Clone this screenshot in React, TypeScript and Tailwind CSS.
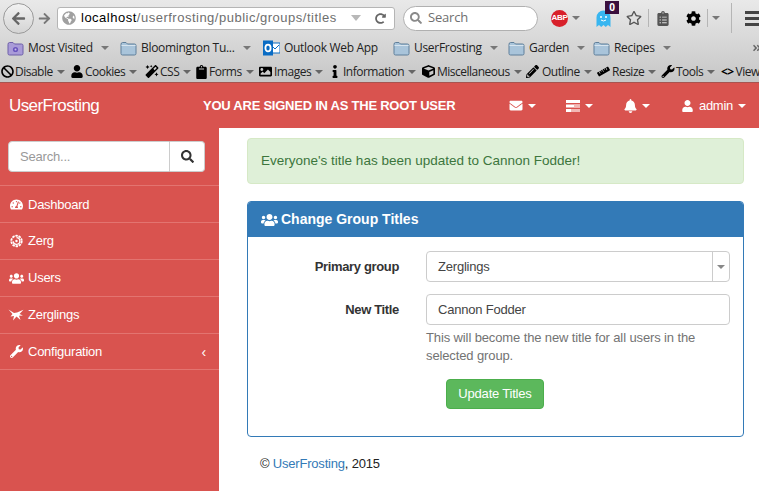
import { ReactNode } from "react";
import {
  FaAngleDoubleRight, FaArrowLeft, FaArrowRight, FaBan, FaBell, FaClipboard, FaClipboardList, FaCog, FaCube, FaEnvelope, FaGlobeAmericas,
  FaImage, FaInfo, FaMagic, FaPencilAlt, FaRedoAlt, FaRegStar, FaRuler, FaSearch, FaTachometerAlt, FaUser, FaUsers, FaWrench,
} from "react-icons/fa";

const Caret = ({ className = "" }: { className?: string }) => (
  <span className={`inline-block w-0 h-0 border-x-[4px] border-x-transparent border-t-[4px] ${className}`} />
);

const Folder = () => (
  <svg width="17" height="15" viewBox="0 0 17 15" className="shrink-0">
    <path d="M1 3.5 Q1 1.5 2.5 1.5 H6 L7.5 3 H14.5 Q16 3 16 4.5 V12.5 Q16 14 14.5 14 H2.5 Q1 14 1 12.5 Z" fill="#a9c4da" stroke="#5f7f9a" />
    <rect x="1.5" y="4" width="14" height="1" fill="#d7e4ee" />
  </svg>
);

const MostVisited = () => (
  <svg width="17" height="15" viewBox="0 0 17 15" className="shrink-0">
    <path d="M1 3.5 Q1 1.5 2.5 1.5 H6 L7.5 3 H14.5 Q16 3 16 4.5 V12.5 Q16 14 14.5 14 H2.5 Q1 14 1 12.5 Z" fill="#a99bd8" stroke="#6d5fa8" />
    <circle cx="8.5" cy="8.5" r="2.6" fill="#6a55bd" />
    <circle cx="8.5" cy="8.5" r="1" fill="#c8bfe8" />
  </svg>
);

const Outlook = () => (
  <svg width="17" height="16" viewBox="0 0 17 16" className="shrink-0">
    <rect x="7" y="3" width="10" height="10" fill="#fff" stroke="#0a6cc4" />
    <path d="M8 5 L12 9 L16 5" fill="none" stroke="#0a6cc4" />
    <rect x="0" y="0.5" width="10" height="15" fill="#0a6cc4" />
    <ellipse cx="5" cy="8" rx="2.6" ry="3.4" fill="none" stroke="#fff" strokeWidth="1.8" />
  </svg>
);

const ZergSwirl = () => (
  <svg width="13" height="14" viewBox="0 0 14 14" className="shrink-0">
    <circle cx="7" cy="7" r="5.6" fill="none" stroke="#fff" strokeWidth="2" strokeDasharray="2.6 0.9" />
    <path d="M7 3.4 A3.6 3.6 0 1 1 3.4 7.4" fill="none" stroke="#fff" strokeWidth="1.4" />
    <circle cx="7" cy="7" r="1.3" fill="#fff" />
  </svg>
);

const Zergling = () => (
  <svg width="16" height="12" viewBox="0 0 16 12" className="shrink-0">
    <path d="M0.5 0.5 L6 4 L9 3.5 L15.5 0.8 L11.5 5 L15 6.5 L11 6.8 L12.5 11 L8.5 7.5 L5 11.5 L6 7 L2.5 7.5 L4.5 5 Z" fill="#fff" />
  </svg>
);

const TaskBars = () => (
  <svg width="14" height="12" viewBox="0 0 14 12" className="shrink-0">
    <rect width="14" height="3" fill="#fff" />
    <rect y="4.5" width="14" height="3" fill="#fff" />
    <rect x="8" y="4.5" width="6" height="3" fill="#f2b8b5" />
    <rect y="9" width="14" height="3" fill="#fff" />
    <rect x="5" y="9" width="9" height="3" fill="#f2b8b5" />
  </svg>
);

const Ghost = () => (
  <svg width="15" height="18" viewBox="0 0 15 18">
    <path d="M0.5 7.5 A7 7 0 0 1 14.5 7.5 V17 L12 15 L9.8 17 L7.5 15 L5.2 17 L3 15 L0.5 17 Z" fill="#38b6f0" />
    <circle cx="5" cy="7" r="1" fill="#fff" />
    <circle cx="10" cy="7" r="1" fill="#fff" />
    <path d="M5 10 Q7.5 12 10 10" fill="none" stroke="#fff" />
  </svg>
);

const bookmarks: { w: string; icon: ReactNode; label: string; caret: boolean }[] = [
  { w: "w-[113px]", icon: <MostVisited />, label: "Most Visited", caret: true },
  { w: "w-[143px]", icon: <Folder />, label: "Bloomington Tu...", caret: true },
  { w: "w-[130px]", icon: <Outlook />, label: "Outlook Web App", caret: false },
  { w: "w-[115px]", icon: <Folder />, label: "UserFrosting", caret: true },
  { w: "w-[85px]", icon: <Folder />, label: "Garden", caret: true },
  { w: "w-[90px]", icon: <Folder />, label: "Recipes", caret: true },
];

const webdev: { w: string; icon: ReactNode; label: string }[] = [
  { w: "w-[69px]", icon: <FaBan className="w-[13px] h-[13px]" />, label: "Disable" },
  { w: "w-[75px]", icon: <FaUser className="w-[14px] h-[13px]" />, label: "Cookies" },
  { w: "w-[50px]", icon: <FaMagic className="w-[14px] h-[13px]" />, label: "CSS" },
  { w: "w-[63px]", icon: <FaClipboard className="w-[13px] h-[14px]" />, label: "Forms" },
  { w: "w-[72px]", icon: <FaImage className="w-[15px] h-[13px]" />, label: "Images" },
  { w: "w-[91px]", icon: <FaInfo className="w-[10px] h-[13px] mr-[2px]" />, label: "Information" },
  { w: "w-[105px]", icon: <FaCube className="w-[15px] h-[13px]" />, label: "Miscellaneous" },
  { w: "w-[71px]", icon: <FaPencilAlt className="w-[13px] h-[13px] mr-[2px]" />, label: "Outline" },
  { w: "w-[64px]", icon: <FaRuler className="w-[13px] h-[13px] mr-[1px]" />, label: "Resize" },
  { w: "w-[60px]", icon: <FaWrench className="w-[14px] h-[13px]" />, label: "Tools" },
];

const nav: { icon: ReactNode; label: string; h: string; text?: string; chevron?: boolean }[] = [
  { icon: <FaTachometerAlt className="w-[13px] h-[13px]" />, label: "Dashboard", h: "h-[37px] pt-px" },
  { icon: <ZergSwirl />, label: "Zerg", h: "h-[37px]" },
  { icon: <FaUsers className="w-[15px] h-[13px] shrink-0" />, label: "Users", h: "h-[37px]" },
  { icon: <Zergling />, label: "Zerglings", h: "h-[37px]", text: "ml-[5px]" },
  { icon: <FaWrench className="w-[13px] h-[13px]" />, label: "Configuration", h: "h-[36px]", chevron: true },
];

function BrowserChrome() {
  return (
    <div className="h-[83px] bg-gradient-to-b from-[#e9e9e9] to-[#c6c6c6] border-b border-[#a8534f] font-['Open_Sans',sans-serif] text-[#222] overflow-hidden">
      <div className="h-[36px] flex items-center relative">
        <div className="ml-[3px] w-[31px] h-[31px] rounded-full border border-[#9a9a9a] bg-gradient-to-b from-[#f2f2f2] to-[#d4d4d4] flex items-center justify-center shrink-0">
          <FaArrowLeft className="w-[15px] h-[15px] text-[#666]" />
        </div>
        <FaArrowRight className="ml-[4px] w-[13px] h-[13px] text-[#777] shrink-0" />
        <div className="ml-[6px] w-[338px] h-[23px] bg-white border border-[#b5b5b5] rounded-[3px] flex items-center shrink-0">
          <FaGlobeAmericas className="ml-[4px] w-[14px] h-[14px] text-[#a0a0a0] shrink-0" />
          <span className="ml-[5px] text-[13px] whitespace-nowrap text-black font-['Liberation_Sans',sans-serif] tracking-[0.5px]">
            localhost<span className="text-[#6e6e6e]">/userfrosting/public/groups/titles</span>
          </span>
          <span className="ml-auto mr-[14px] w-0 h-0 border-x-[5px] border-x-transparent border-t-[6px] border-t-[#b8b8b8]" />
          <FaRedoAlt className="mr-[8px] w-[11px] h-[11px] text-[#666]" />
        </div>
        <div className="ml-[8px] w-[135px] h-[25px] bg-white border border-[#b0b0b0] rounded-full flex items-center shrink-0">
          <FaSearch className="ml-[6px] w-[12px] h-[12px] text-[#8a8a8a]" />
          <span className="ml-[6px] text-[13px] text-[#6f6f6f]">Search</span>
        </div>
        <div className="ml-[13px] w-[17px] h-[17px] rounded-full bg-[#d8202a] flex items-center justify-center shrink-0">
          <span className="text-[8px] tracking-[-0.3px] font-bold text-white leading-none font-['Liberation_Sans',sans-serif]">ABP</span>
        </div>
        <Caret className="ml-[4px] border-t-[#777] shrink-0" />
        <div className="ml-[16px] shrink-0 mt-[2px]"><Ghost /></div>
        <FaRegStar className="ml-[15px] w-[16px] h-[16px] text-[#555] shrink-0" />
        <div className="ml-[6px] w-px h-[18px] bg-[#b5b5b5] shrink-0" />
        <FaClipboardList className="ml-[7px] w-[14px] h-[15px] text-[#555] shrink-0" />
        <FaCog className="ml-[16px] w-[15px] h-[15px] text-black shrink-0" />
        <div className="ml-[6px] w-px h-[18px] bg-[#b5b5b5] shrink-0" />
        <Caret className="ml-[4px] border-t-[#777] shrink-0" />
        <div className="ml-[11px] w-px h-[30px] bg-[#b5b5b5] shrink-0" />
        <div className="ml-[13px] w-[17px] flex flex-col gap-[3px] shrink-0">
          <div className="h-[3px] bg-[#444]" />
          <div className="h-[3px] bg-[#444]" />
          <div className="h-[3px] bg-[#444]" />
        </div>
        <div className="absolute left-[605px] top-[1px] w-[14px] h-[13px] bg-[#3a0f3d] text-white text-[10px] font-bold leading-[13px] text-center">0</div>
      </div>
      <div className="h-[24px] flex items-center pl-[7px] text-[12px] tracking-[-0.3px] whitespace-nowrap">
        {bookmarks.map((b) => (
          <div key={b.label} className={`${b.w} shrink-0 flex items-center gap-[4px]`}>
            {b.icon}
            <span>{b.label}</span>
            {b.caret && <Caret className="ml-[4px] border-t-[#777]" />}
          </div>
        ))}
        <FaAngleDoubleRight className="ml-auto mr-[-3px] w-[10px] h-[10px] text-[#666] shrink-0" />
      </div>
      <div className="h-[22px] pt-[1px] flex items-center pl-px text-[12px] tracking-[-0.5px] whitespace-nowrap">
        {webdev.map((w) => (
          <div key={w.label} className={`${w.w} shrink-0 flex items-center gap-[1px]`}>
            <span className="text-black flex">{w.icon}</span>
            <span>{w.label}</span>
            <Caret className="ml-[3px] border-x-[3px] border-t-[3px] border-t-[#666]" />
          </div>
        ))}
        <span className="font-bold text-black tracking-tighter shrink-0">&lt;&gt;</span>
        <span className="ml-[2px] shrink-0">View</span>
      </div>
    </div>
  );
}

export default function App() {
  return (
    <div className="w-[759px] h-[491px] overflow-hidden bg-white font-['Liberation_Sans',sans-serif] text-[13px] tracking-[-0.2px] text-[#333]">
      <BrowserChrome />
      <header className="h-[45px] bg-[#d9534f] text-white flex items-center">
        <div className="w-[203px] pl-[9px] text-[17px] tracking-[-0.6px] shrink-0">UserFrosting</div>
        <div className="w-[306px] font-bold text-[13px] tracking-[-0.24px] whitespace-nowrap shrink-0">YOU ARE SIGNED IN AS THE ROOT USER</div>
        <div className="w-[57px] flex items-center gap-[5px] shrink-0"><FaEnvelope className="w-[14px] h-[13px]" /><Caret className="border-t-white" /></div>
        <div className="w-[58px] flex items-center gap-[5px] shrink-0"><TaskBars /><Caret className="border-t-white" /></div>
        <div className="w-[58px] flex items-center gap-[5px] shrink-0"><FaBell className="w-[13px] h-[14px]" /><Caret className="border-t-white" /></div>
        <div className="flex items-center shrink-0">
          <FaUser className="w-[11px] h-[12px]" />
          <span className="ml-[6px] tracking-[-0.3px]">admin</span>
          <Caret className="ml-[5px] border-t-white" />
        </div>
      </header>
      <div className="flex h-[363px]">
        <aside className="w-[219px] shrink-0 bg-[#d9534f] text-white">
          <div className="pl-[8px] pr-[14px] pt-[13px] pb-[13px] flex border-b border-[#e37470]">
            <div className="flex-1 h-[31px] bg-white border border-[#ccc] rounded-l-[4px] pl-[11px] flex items-center text-[#999]">Search...</div>
            <div className="w-[35px] h-[31px] bg-white border border-l-0 border-[#ccc] rounded-r-[4px] flex items-center justify-center">
              <FaSearch className="w-[13px] h-[13px] text-[#333]" />
            </div>
          </div>
          {nav.map((n) => (
            <div key={n.label} className={`${n.h} pl-[9px] pr-[13px] flex items-center border-b border-[#e37470]`}>
              <span className="w-[14px] flex justify-center">{n.icon}</span>
              <span className={`ml-[5px] tracking-[-0.25px] ${n.text ?? ""}`}>{n.label}</span>
              {n.chevron && <span className="ml-auto text-[14px] leading-none">‹</span>}
            </div>
          ))}
        </aside>
        <main className="flex-1 pl-[28px] pr-[15px] pt-[10px]">
          <div className="h-[46px] bg-[#dff0d8] border border-[#d6e9c6] rounded-[4px] text-[#3c763d] text-[13.5px] tracking-normal pl-[13px] flex items-center">
            Everyone's title has been updated to Cannon Fodder!
          </div>
          <section className="mt-[17px] h-[236px] border border-[#337ab7] rounded-[4px] overflow-hidden">
            <div className="h-[35px] bg-[#337ab7] text-white font-bold text-[14px] tracking-normal flex items-center pl-[13px]">
              <FaUsers className="w-[17px] h-[14px]" />
              <span className="ml-[3px]">Change Group Titles</span>
            </div>
            <div className="pt-[14px] pr-[13px] flex flex-col">
              <div className="flex items-center h-[31px]">
                <label className="w-[151px] text-right font-bold tracking-[-0.35px] shrink-0">Primary group</label>
                <div className="ml-[27px] flex-1 h-[31px] border border-[#ccc] rounded-[4px] flex items-center pl-[11px] text-[#444]">
                  Zerglings
                  <span className="ml-auto w-[17px] h-full border-l border-[#ccc] flex items-center justify-center">
                    <Caret className="border-x-[3px] border-t-[4px] border-t-[#888]" />
                  </span>
                </div>
              </div>
              <div className="flex items-center h-[31px] mt-[12px]">
                <label className="w-[151px] text-right font-bold tracking-[-0.35px] shrink-0">New Title</label>
                <div className="ml-[27px] flex-1 h-[31px] pt-px border border-[#ccc] rounded-[4px] flex items-center pl-[11px] text-[#444]">Cannon Fodder</div>
              </div>
              <p className="ml-[178px] mt-[4px] text-[#737373] leading-[18px] tracking-[-0.12px]">This will become the new title for all users in the selected group.</p>
              <button className="ml-[198px] mt-[14px] w-[98px] h-[30px] bg-[#5cb85c] border border-[#4cae4c] rounded-[4px] text-white">Update Titles</button>
            </div>
          </section>
          <p className="mt-[17px] ml-[13px] text-[#222]">
            © <span className="text-[#337ab7]">UserFrosting</span>, 2015
          </p>
        </main>
      </div>
    </div>
  );
}
